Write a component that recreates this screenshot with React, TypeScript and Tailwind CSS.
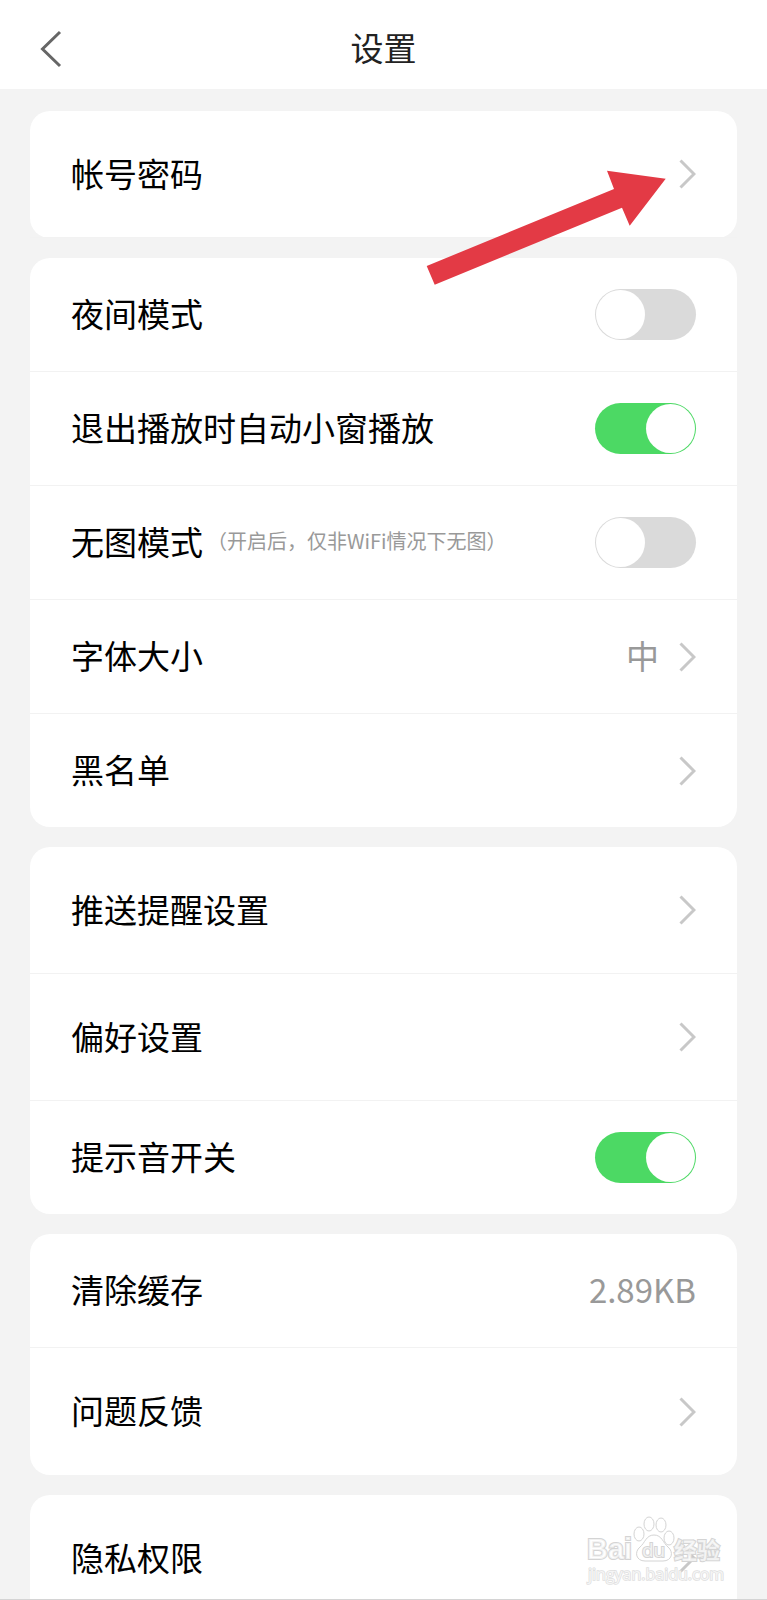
import type { ReactNode } from "react";

type RowType = {
  label: string;
  hint?: string;
  value?: string;
  tall?: boolean;
  toggle?: boolean;
  checked?: boolean;
  arrow?: boolean;
};

const groups: RowType[][] = [
  [{ label: "帐号密码", tall: true, arrow: true }],
  [
    { label: "夜间模式", toggle: true },
    { label: "退出播放时自动小窗播放", toggle: true, checked: true },
    {
      label: "无图模式",
      hint: "（开启后，仅非WiFi情况下无图）",
      toggle: true,
    },
    { label: "字体大小", value: "中", arrow: true },
    { label: "黑名单", arrow: true },
  ],
  [
    { label: "推送提醒设置", tall: true, arrow: true },
    { label: "偏好设置", tall: true, arrow: true },
    { label: "提示音开关", toggle: true, checked: true },
  ],
  [
    { label: "清除缓存", value: "2.89KB" },
    { label: "问题反馈", tall: true, arrow: true },
  ],
  [{ label: "隐私权限", tall: true, arrow: true }],
];

export default function App() {
  return (
    <div className="flex h-screen flex-col border-b border-[#d4d4d4] bg-[#f3f3f3] font-['Noto_Sans_CJK_SC',sans-serif] text-[33px] leading-10 text-black">
      <header className="grid h-[89px] shrink-0 grid-cols-[1fr_auto_1fr] items-center bg-white px-10 pt-2">
        <button type="button" aria-label="返回" className="justify-self-start">
          <svg width="22" height="38" viewBox="0 0 22 38" fill="none">
            <path d="M20 2 2.500 19 20 36" stroke="#666" strokeWidth="3" />
          </svg>
        </button>
        <h1 className="pb-1 text-[#222]">设置</h1>
      </header>
      <main className="flex flex-1 flex-col gap-5 overflow-y-auto px-[30px] pt-[22px] [scrollbar-width:none]">
        {groups.map((rows, index) => (
          <Group key={rows[0].label}>
            {rows.map((row) => (
              <Row row={row} key={row.label} />
            ))}
            {index === 0 && <Pointer />}
            {index === groups.length - 1 && <Watermark />}
          </Group>
        ))}
      </main>
    </div>
  );
}

const Group = ({ children }: { children: ReactNode }) => {
  return (
    <section className="relative shrink-0 divide-y divide-[#f2f2f2] rounded-[20px] bg-white">
      {children}
    </section>
  );
};

const Row = ({ row }: { row: RowType }) => {
  const height = row.tall ? "h-[127px]" : "h-[114px] last:h-[113px]";
  const content = (
    <>
      <span className="flex items-center gap-1 pb-[3px]">
        {row.label}
        {row.hint && <span className="text-xl text-[#999]">{row.hint}</span>}
      </span>
      <span className="flex items-center gap-5">
        {row.value && <span className="pb-[3px] text-[#999]">{row.value}</span>}
        {row.arrow && <Chevron />}
        {row.toggle && (
          <input
            type="checkbox"
            role="switch"
            defaultChecked={row.checked}
            className="h-[51px] w-[101px] appearance-none rounded-full bg-[#dadada] p-px before:block before:size-[49px] before:rounded-full before:bg-white checked:bg-[#4cd964] checked:before:ml-[50px]"
          />
        )}
      </span>
    </>
  );

  if (row.toggle) {
    return (
      <label className={`${height} flex items-center justify-between px-[41px]`}>
        {content}
      </label>
    );
  }

  return (
    <button
      type="button"
      className={`${height} flex w-full items-center justify-between px-[41px]`}
    >
      {content}
    </button>
  );
};

const Chevron = () => (
  <svg width="17" height="30" viewBox="0 0 17 30" fill="none">
    <path d="M1.500 1.500 15 15 1.500 28.500" stroke="#c8c8c8" strokeWidth="3" />
  </svg>
);

const Pointer = () => (
  <svg
    width="240"
    height="115"
    viewBox="0 0 240 115"
    className="pointer-events-none absolute top-[59px] right-[71px] z-10"
  >
    <path
      d="M.7 96 188 19 181 .7 239.700 8.700 203.700 55.700 196 37.700 8.700 114.700Z"
      fill="#e33a45"
    />
  </svg>
);

const Watermark = () => (
  <svg
    width="144"
    height="72"
    viewBox="0 0 144 72"
    className="pointer-events-none absolute top-[20px] right-[10px]"
    fill="#fff"
    fillOpacity="0.7"
    stroke="#d4d4d4"
    fontFamily="'Open Sans', 'Noto Sans CJK SC', sans-serif"
  >
    <g strokeWidth="1">
      <ellipse cx="56" cy="19" rx="5" ry="7" />
      <ellipse cx="66" cy="9" rx="5" ry="7" />
      <ellipse cx="78" cy="10" rx="5" ry="7" />
      <ellipse cx="86" cy="23" rx="5" ry="7" />
      <path d="M71 20C63 20 62 28 57 32C51 37 53 46 62 46H80C89 46 91 37 85 32C80 28 79 20 71 20Z" />
    </g>
    <g paintOrder="stroke" strokeWidth="2">
      <text
        x="4"
        y="44"
        fontSize="29"
        fontWeight="700"
        fontFamily="'Liberation Sans', sans-serif"
      >
        Bai
      </text>
      <text x="59" y="42" fontSize="19">
        du
      </text>
      <text x="91" y="44" fontSize="23" fontWeight="700">
        经验
      </text>
    </g>
    <text
      x="5"
      y="65"
      fontSize="16"
      paintOrder="stroke"
      stroke="#e0e0e0"
      strokeWidth="1.500"
    >
      jingyan.baidu.com
    </text>
  </svg>
);
